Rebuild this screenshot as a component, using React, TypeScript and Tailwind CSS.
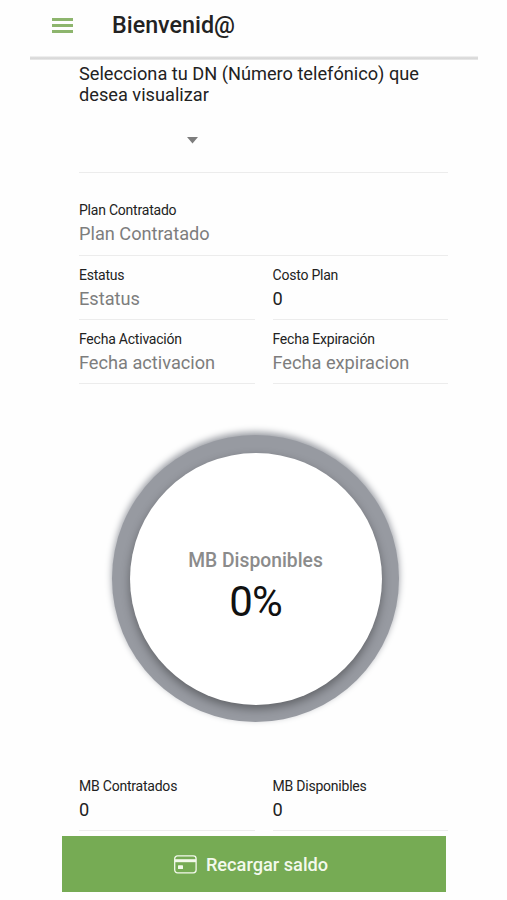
import React from "react";
import { clsx } from "clsx";

interface FieldProps {
  label: string;
  value: string;
  placeholder?: boolean;
  className?: string;
}

function Field({ label, value, placeholder, className }: FieldProps) {
  return (
    <div className={clsx("flex flex-col border-b border-[#ececec]", className)}>
      <span className="text-[14px] leading-[18px] tracking-[-0.22px] text-[#222]">{label}</span>
      <span
        className={clsx(
          "mt-[3px] text-[18.2px] leading-[24px]",
          placeholder ? "text-[#7d7d7d]" : "text-[#222]"
        )}
      >
        {value}
      </span>
    </div>
  );
}

function CardIcon() {
  return (
    <svg width="23" height="19" viewBox="0 0 23 19" fill="none" className="mt-[1px] shrink-0">
      <rect x="0.7" y="0.9" width="21.4" height="17" rx="2.8" stroke="#f3f9ec" strokeWidth="1.3" />
      <rect x="1" y="4.2" width="21" height="3" fill="#f3f9ec" />
      <rect x="4" y="10.2" width="5" height="3.8" rx="0.6" fill="#f3f9ec" />
    </svg>
  );
}

export default function App() {
  return (
    <div className="h-[900px] w-[507px] overflow-hidden bg-[#fefefe] font-['Roboto',sans-serif]">
      <header className="ml-[30px] flex h-[60px] w-[448px] items-start bg-[linear-gradient(to_bottom,transparent_56px,#dedede_57px,#d8d8d8_59px,#f4f4f4_60px)]">
        <button className="mt-[18px] ml-[22px] flex w-[21px] flex-col gap-[3.5px]" aria-label="Menu">
          <span className="h-[2.5px] w-full bg-[#8db56d]" />
          <span className="h-[2.5px] w-full bg-[#8db56d]" />
          <span className="h-[2.5px] w-full bg-[#8db56d]" />
        </button>
        <h1 className="mt-[10px] ml-[39px] text-[23.3px] leading-[30px] font-medium text-[#222]">
          Bienvenid@
        </h1>
      </header>

      <main className="ml-[79px] w-[369px]">
        <div className="h-[113px] border-b border-[#ececec] pt-[3px]">
          <p className="text-[18.2px] leading-[21px] text-[#222]">
            Selecciona tu DN (Número telefónico) que
            <br />
            desea visualizar
          </p>
          <svg width="11" height="7" viewBox="0 0 11 7" className="mt-[32px] ml-[108px]">
            <path d="M0 0H11L5.5 6.5Z" fill="#7d7d7d" />
          </svg>
        </div>

        <div className="grid grid-cols-2 gap-x-[18px]">
          <Field
            label="Plan Contratado"
            value="Plan Contratado"
            placeholder
            className="col-span-2 h-[83px] pt-[28px]"
          />
          <Field label="Estatus" value="Estatus" placeholder className="h-[64px] pt-[10px]" />
          <Field label="Costo Plan" value="0" className="h-[64px] pt-[10px]" />
          <Field
            label="Fecha Activación"
            value="Fecha activacion"
            placeholder
            className="h-[64px] pt-[10px]"
          />
          <Field
            label="Fecha Expiración"
            value="Fecha expiracion"
            placeholder
            className="h-[64px] pt-[10px]"
          />
        </div>

        <div className="mt-[51px] ml-[33px] flex size-[287px] items-center justify-center rounded-full bg-[#979aa1] pt-[1px] shadow-[0_-3px_7px_#979aa1]">
          <div className="flex size-[252px] flex-col items-center rounded-full bg-white pt-[96px] shadow-[0_4px_10px_rgba(0,0,0,0.36)]">
            <span className="text-[19.3px] leading-[24px] font-medium text-[#8b8b8b]">MB Disponibles</span>
            <span className="mt-[5px] text-[42px] leading-[48px] tracking-[-1px] text-[#111]">0%</span>
          </div>
        </div>

        <div className="mt-[45px] grid grid-cols-2 gap-x-[18px]">
          <Field label="MB Contratados" value="0" className="h-[64px] pt-[10px]" />
          <Field label="MB Disponibles" value="0" className="h-[64px] pt-[10px]" />
        </div>
      </main>

      <button className="mt-[5px] ml-[62px] flex h-[56px] w-[384px] items-center justify-center gap-[9px] bg-[#76ab54] pr-[6px] text-[18.2px] font-medium text-[#f3f9ec]">
        <CardIcon />
        <span className="mt-[1px]">Recargar saldo</span>
      </button>
    </div>
  );
}
